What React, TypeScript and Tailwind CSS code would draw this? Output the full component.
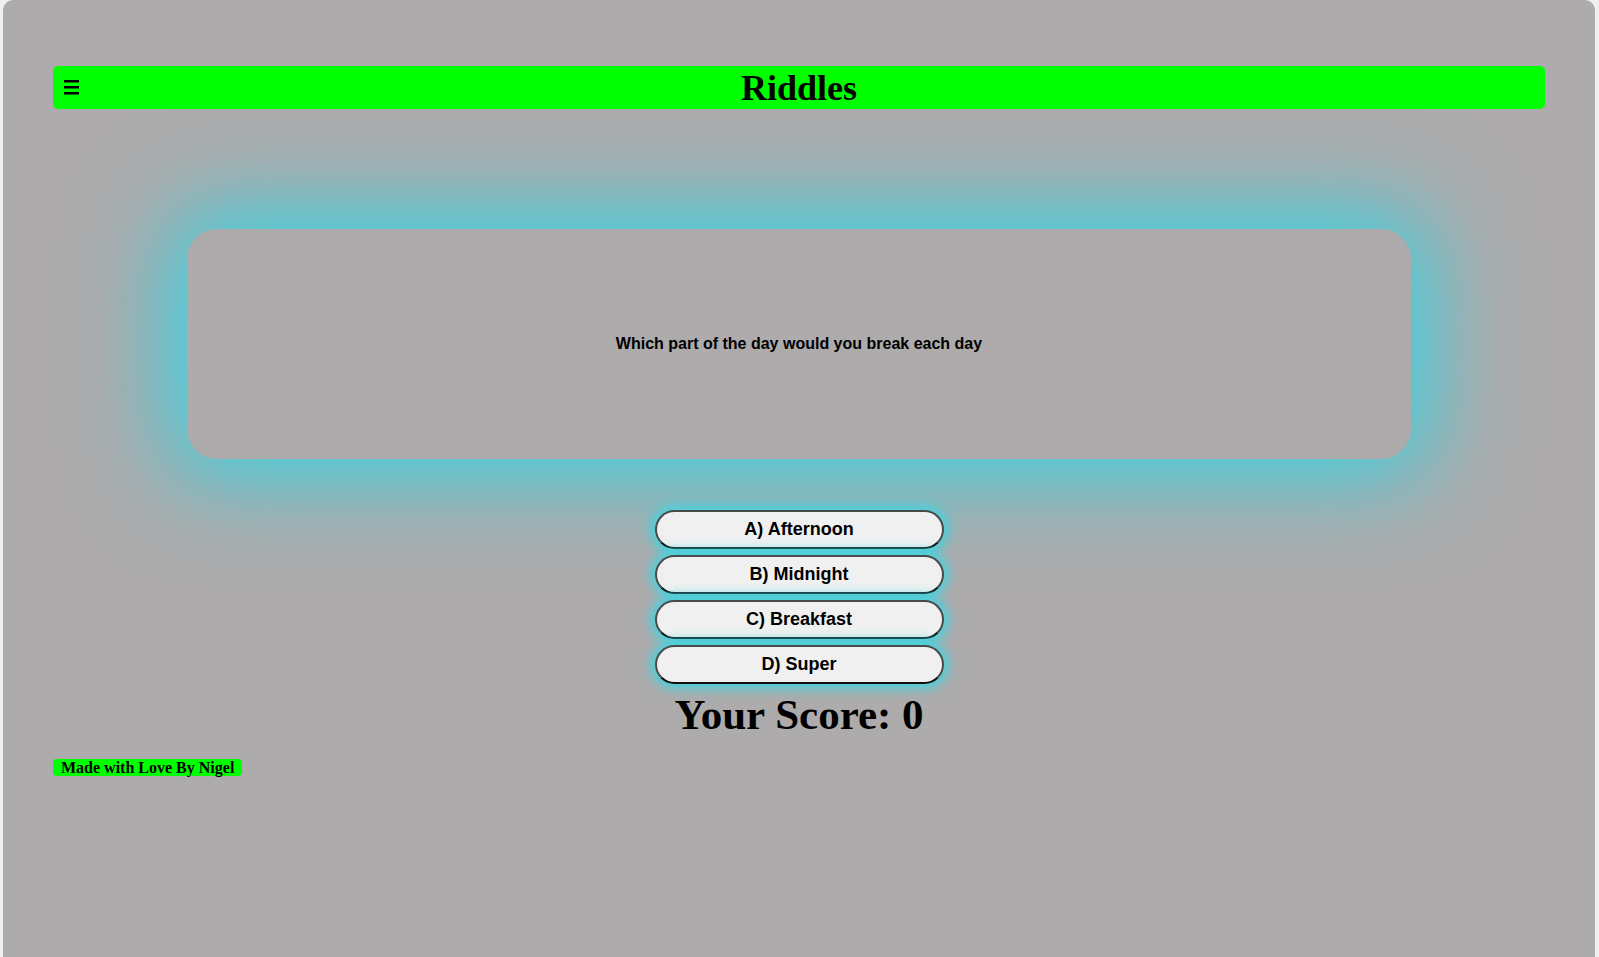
import { useState } from 'react';

const answers = ['A) Afternoon', 'B) Midnight', 'C) Breakfast', 'D) Super'];

function MenuIcon() {
    return (
        <svg width="16" height="15" viewBox="0 0 16 15" className="block">
            <rect x="0" y="0" width="15" height="2.5" fill="#000" />
            <rect x="0" y="6" width="15" height="2.5" fill="#000" />
            <rect x="0" y="12" width="15" height="2.5" fill="#000" />
        </svg>
    );
}

export default function App() {
    const [score, setScore] = useState(0);

    return (
        <div className="min-h-screen bg-[#f0f0f0]">
            <div className="ml-[3px] min-h-[957px] w-[1592px] rounded-t-[10px] bg-[#adabac] px-[50px] pt-[66px]">
                <header className="grid h-[43px] grid-cols-[1fr_auto_1fr] items-center rounded-[5px] bg-[#00ff00] px-[11px]">
                    <button className="w-fit cursor-pointer">
                        <MenuIcon />
                    </button>
                    <h1 className="font-['Liberation_Serif',serif] text-[36px] leading-none font-bold text-black">
                        Riddles
                    </h1>
                    <div />
                </header>

                <div className="mx-auto mt-[120px] flex h-[230px] w-[1224px] items-center justify-center rounded-[30px] bg-[#adabac] shadow-[0_0_90px_20px_#3ed2e0]">
                    <p className="font-['Liberation_Sans',sans-serif] text-[16px] font-bold text-black">
                        Which part of the day would you break each day
                    </p>
                </div>

                <div className="mt-[51px] flex flex-col items-center gap-[6px]">
                    {answers.map((a) => (
                        <button
                            key={a}
                            onClick={() => setScore(score)}
                            className="h-[39px] w-[289px] cursor-pointer rounded-full border-2 border-[#4a4a4a] border-b-[#111] bg-[#f0f0f0] font-['Liberation_Sans',sans-serif] text-[18px] font-bold text-black shadow-[0_0_12px_4px_#3ed6e2]"
                        >
                            {a}
                        </button>
                    ))}
                </div>

                <h2 className="mt-[6px] text-center font-['Liberation_Serif',serif] text-[43px] leading-[1.15] font-bold text-black">
                    Your Score: {score}
                </h2>

                <div className="mt-[16px]">
                    <span className="inline-block rounded-[4px] bg-[#00ff00] px-[8px] font-['Liberation_Serif',serif] text-[16px] leading-[17px] font-bold text-black">
                        Made with Love By Nigel
                    </span>
                </div>
            </div>
        </div>
    );
}
